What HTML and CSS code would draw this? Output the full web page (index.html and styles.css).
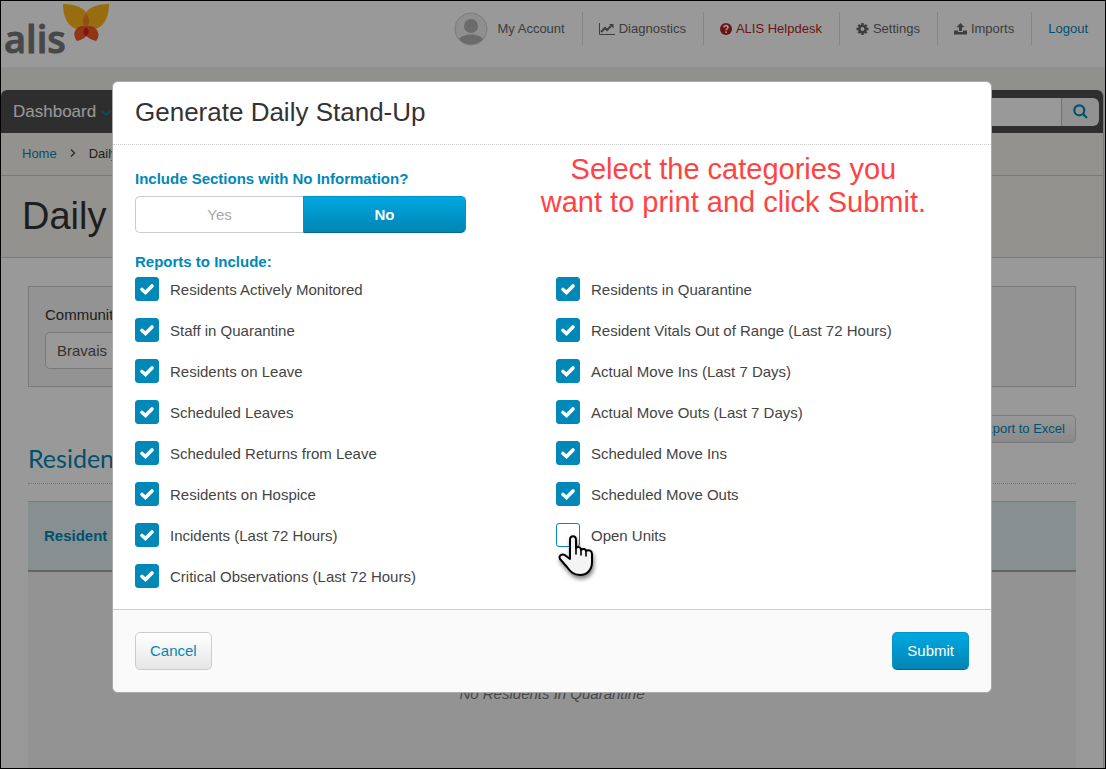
FILE: index.html
```html
<!DOCTYPE html>
<html lang="en">
    <head>
        <meta charset="UTF-8">
        <meta name="viewport" content="width=device-width, initial-scale=1.0">
        <title>Daily Stand-Up</title>
        <link rel="stylesheet" href="styles.css">
    </head>
    <body>
        <div class="screen">
            <header class="header">
                <a href="#" class="logo" aria-label="alis">
                    <span class="logo-text">alis</span>
                    <svg class="logo-mark" width="46" height="38" viewBox="0 0 46 38">
                        <path d="M0 0C14 0 25 5 26 16C26 22 24 25 20 26C8 26 0 17 0 0Z" fill="#fcb61a"/>
                        <path d="M46 0C32 0 21 5 20 16C20 22 22 25 26 26C38 26 46 17 46 0Z" fill="#fcb61a"/>
                        <path d="M23 9C27 14 27 21 23 26C19 21 19 14 23 9Z" fill="#f58220"/>
                        <path d="M14 37C8 30 13 22 20 22C28 23 29 33 14 37Z" fill="#f15a24"/>
                        <path d="M33 37C39 30 33 22 26 22C18 23 18 33 33 37Z" fill="#f15a24"/>
                        <path d="M23 23C27 26 26 30 23 32C20 30 19 26 23 23Z" fill="#d91f26"/>
                    </svg>
                </a>
                <nav class="top-nav">
                    <a href="#" class="account">
                        <svg width="34" height="34" viewBox="0 0 34 34">
                            <circle cx="17" cy="17" r="16" fill="#eee" stroke="#ccc"/>
                            <circle cx="17" cy="14" r="7" fill="#b2b2b2"/>
                            <path d="M5 27C9 21 25 21 29 27C24 34 10 34 5 27Z" fill="#b2b2b2"/>
                        </svg>
                        My Account
                    </a>
                    <a href="#">
                        <svg width="16" height="12" viewBox="0 0 16 12" fill="none" stroke="#666">
                            <path d="M.5 0V11.5H16"/>
                            <path d="M2 9L6 5L8 7L12 3" stroke-width="2"/>
                            <path d="M10 1H14.500V5.500Z" fill="#666" stroke="none"/>
                        </svg>
                        Diagnostics
                    </a>
                    <a href="#" class="helpdesk">
                        <svg width="12" height="12" viewBox="0 0 12 12">
                            <circle cx="6" cy="6" r="6" fill="#b51f1f"/>
                            <path d="M4 4.500C4 2 8 2 8 4.500C8 6 6 5.700 6 7.300" fill="none" stroke="#fff" stroke-width="1.600"/>
                            <path d="M5.200 8.300H6.800V9.900H5.200Z" fill="#fff"/>
                        </svg>
                        ALIS Helpdesk
                    </a>
                    <a href="#">
                        <svg width="13" height="12" viewBox="0 0 12 12">
                            <circle cx="6" cy="6" r="3.200" fill="none" stroke="#666" stroke-width="2.600"/>
                            <path d="M6 0V2M6 10V12M0 6H2M10 6H12M1.800 1.800L3 3M9 9L10.200 10.200M1.800 10.200L3 9M9 3L10.200 1.800" stroke="#666" stroke-width="2.400"/>
                        </svg>
                        Settings
                    </a>
                    <a href="#">
                        <svg width="13" height="12" viewBox="0 0 13 12" fill="#666">
                            <path d="M6.500 0L10.500 4.200H8V8H5V4.200H2.500Z"/>
                            <path d="M0 7.500H4V9H9V7.500H13V11.500H0Z"/>
                        </svg>
                        Imports
                    </a>
                    <a href="#" class="logout">Logout</a>
                </nav>
            </header>

            <div class="page">
                <nav class="main-nav">
                    <a href="#" class="dashboard">
                        Dashboard
                        <svg width="10" height="7" viewBox="0 0 10 7" fill="none" stroke="#0088b8" stroke-width="1.500"><path d="M1 1L5 5L9 1"/></svg>
                    </a>
                    <form class="search">
                        <input type="search" aria-label="Search">
                        <button type="button" aria-label="Search">
                            <svg width="15" height="15" viewBox="0 0 15 15" fill="none" stroke="#0088b8" stroke-width="2.200"><circle cx="6.300" cy="6.300" r="5"/><path d="M10 10L14 14"/></svg>
                        </button>
                    </form>
                </nav>
                <div class="breadcrumb">
                    <a href="#">Home</a>
                    <svg width="6" height="8" viewBox="0 0 6 8" fill="none" stroke="#444" stroke-width="1.300"><path d="M1 .5L4.500 4L1 7.500"/></svg>
                    <span>Daily Stand-Up</span>
                </div>
                <h1>Daily Stand-Up</h1>

                <main class="content">
                    <div class="filters">
                        <label for="community">Community</label>
                        <select id="community">
                            <option>Bravais</option>
                        </select>
                    </div>
                    <button type="button" class="btn export">Export to Excel</button>
                    <h2>Residents in Quarantine</h2>
                    <table>
                        <thead>
                            <tr>
                                <th>Resident</th>
                            </tr>
                        </thead>
                        <tbody>
                            <tr>
                                <td>No Residents In Quarantine</td>
                            </tr>
                        </tbody>
                    </table>
                </main>
            </div>

            <div class="overlay">
                <form class="modal" role="dialog" aria-labelledby="modalTitle">
                    <div class="modal-header">
                        <h3 id="modalTitle">Generate Daily Stand-Up</h3>
                    </div>
                    <div class="modal-body">
                        <p class="note">Select the categories you<br>want to print and click Submit.</p>
                        <h4>Include Sections with No Information?</h4>
                        <div class="toggle">
                            <label><input type="radio" name="empty"><span>Yes</span></label>
                            <label><input type="radio" name="empty" checked><span>No</span></label>
                        </div>
                        <h4>Reports to Include:</h4>
                        <div class="reports">
                            <div class="column">
                                <label><input type="checkbox" checked>Residents Actively Monitored</label>
                                <label><input type="checkbox" checked>Staff in Quarantine</label>
                                <label><input type="checkbox" checked>Residents on Leave</label>
                                <label><input type="checkbox" checked>Scheduled Leaves</label>
                                <label><input type="checkbox" checked>Scheduled Returns from Leave</label>
                                <label><input type="checkbox" checked>Residents on Hospice</label>
                                <label><input type="checkbox" checked>Incidents (Last 72 Hours)</label>
                                <label><input type="checkbox" checked>Critical Observations (Last 72 Hours)</label>
                            </div>
                            <div class="column">
                                <label><input type="checkbox" checked>Residents in Quarantine</label>
                                <label><input type="checkbox" checked>Resident Vitals Out of Range (Last 72 Hours)</label>
                                <label><input type="checkbox" checked>Actual Move Ins (Last 7 Days)</label>
                                <label><input type="checkbox" checked>Actual Move Outs (Last 7 Days)</label>
                                <label><input type="checkbox" checked>Scheduled Move Ins</label>
                                <label><input type="checkbox" checked>Scheduled Move Outs</label>
                                <label class="hovered">
                                    <input type="checkbox">Open Units
                                    <svg class="cursor" width="36" height="44" viewBox="0 0 36 44">
                                        <path d="M12 21V6C12 1 18 1 18 6V14C20 12 23 13 23 16C25 14 28 15 28 17C31 15 34 17 34 20V28C34 36 29 41 22 41C15 41 12 37 9 33L2 25C0 21 5 19 8 22L12 25Z" fill="#f4f4f4" stroke="#000" stroke-width="2" stroke-linejoin="round"/>
                                        <path d="M18 13V20M23 15V21M28 17V22" stroke="#000" stroke-width="1.600" stroke-linecap="round"/>
                                    </svg>
                                </label>
                            </div>
                        </div>
                    </div>
                    <div class="modal-footer">
                        <button type="button" class="btn">Cancel</button>
                        <button type="button" class="btn primary">Submit</button>
                    </div>
                </form>
            </div>
        </div>
    </body>
</html>
```
FILE: styles.css
```css
* {
    box-sizing: border-box;
}
body {
    margin: 0;
    font-family: "Liberation Sans", Arial, sans-serif;
    font-size: 15px;
    color: #333;
}
a {
    color: #0088b8;
    text-decoration: none;
}
h1, h2, h3, h4, p {
    margin: 0;
    font-weight: normal;
}
button, input, select {
    font-family: inherit;
}
.screen {
    position: relative;
    height: 100vh;
    overflow: hidden;
    border: 1px solid #000;
    background-color: #f1f1ec;
}

/* header */
.header {
    display: flex;
    justify-content: space-between;
    height: 66px;
    background-color: #fff;
}
.logo {
    display: flex;
    padding: 3px 0 0 3px;
    color: #77787b;
}
.logo-text {
    font-family: "Open Sans", sans-serif;
    font-size: 38px;
    font-weight: 600;
    line-height: 68px;
    margin-right: -3px;
    -webkit-text-stroke: 1px #77787b;
}
.top-nav {
    display: flex;
    padding-top: 11px;
}
.top-nav a {
    display: flex;
    align-items: center;
    gap: 4px;
    height: 33px;
    padding: 0 17px 0 16px;
    border-left: 1px solid #e0e0e0;
    font-size: 13px;
    color: #666;
}
.top-nav .account {
    gap: 10px;
    border-left: none;
}
.top-nav .helpdesk {
    color: #b51f1f;
}
.top-nav .logout {
    color: #0088b8;
}

/* page */
.page {
    margin: 23px 1px 0 0;
    border-right: 1px solid #ccc;
    background-color: #fff;
    border-radius: 6px 6px 0 0;
}
.main-nav {
    display: flex;
    justify-content: space-between;
    align-items: center;
    height: 43px;
    padding: 0 4px 0 12px;
    background-color: #4d4d4d;
    border-radius: 6px 6px 0 0;
}
.dashboard {
    font-size: 17px;
    color: #fff;
}
.search {
    display: flex;
    width: 260px;
    height: 28px;
}
.search input {
    flex: 1;
    min-width: 0;
    border: none;
    border-radius: 6px 0 0 6px;
    background-color: #fff;
}
.search button {
    width: 38px;
    padding: 2px 0 0;
    border: none;
    border-left: 1px solid #bbb;
    border-radius: 0 6px 6px 0;
    background-color: #f4f4f4;
}
.breadcrumb {
    display: flex;
    align-items: center;
    gap: 13px;
    height: 43px;
    padding: 0 21px 2px;
    border-bottom: 1px solid #ccc;
    background-color: #f7f4ee;
    font-size: 13px;
}
.page h1 {
    padding-left: 21px;
    border-bottom: 1px solid #ccc;
    background-color: #f7f4ee;
    font-size: 38px;
    line-height: 81px;
}
.content {
    display: flex;
    flex-direction: column;
    padding: 28px 27px 0;
}
.filters {
    display: flex;
    flex-direction: column;
    align-items: flex-start;
    gap: 9px;
    padding: 19px 16px 17px;
    border: 1px solid #ccc;
    background-color: #f5f5f5;
}
.filters select {
    appearance: none;
    width: 240px;
    height: 37px;
    padding: 0 11px;
    border: 1px solid #ccc;
    border-radius: 5px;
    background-color: #fff;
    font-size: 15px;
    color: #555;
}
.btn {
    height: 38px;
    padding: 0 14px 2px;
    border: 1px solid #ccc;
    border-radius: 5px;
    background: linear-gradient(#fff, #e6e6e6);
    font-size: 15px;
    color: #0088b8;
}
.btn.export {
    align-self: flex-end;
    height: 28px;
    margin-top: 28px;
    padding: 0 10px 2px;
    font-size: 13px;
}
.content h2 {
    margin-bottom: 17px;
    padding-bottom: 10px;
    border-bottom: 1px dotted #bbb;
    font-family: Lato, sans-serif;
    font-size: 25px;
    line-height: 30px;
    color: #0088b8;
}
table {
    width: 100%;
    border-collapse: collapse;
}
th {
    height: 69px;
    padding: 0 16px;
    border-top: 1px solid #ccc;
    border-bottom: 2px solid #a5a5a5;
    background-color: #e3eff2;
    text-align: left;
    color: #0088b8;
}
td {
    height: 244px;
    background-color: #f5f5f5;
    text-align: center;
    font-style: italic;
    color: #777;
}

/* modal */
.overlay {
    position: absolute;
    inset: 0;
    display: flex;
    justify-content: center;
    align-items: flex-start;
    padding: 80px 22px 80px 20px;
    background-color: rgba(0, 0, 0, 0.4);
}
.modal {
    width: 100%;
    max-width: 880px;
    border: 1px solid #aaa;
    border-radius: 6px;
    background-color: #fff;
}
.modal-header {
    padding: 0 22px 2px;
    border-bottom: 1px dotted #ccc;
}
.modal-header h3 {
    font-size: 26px;
    line-height: 60px;
}
.modal-body {
    position: relative;
    padding: 24px 22px 21px;
    color: #444;
}
.modal-body h4 {
    font-size: 15px;
    font-weight: bold;
    line-height: 20px;
    color: #0088b8;
}
.note {
    position: absolute;
    top: 8px;
    right: 65px;
    font-size: 29px;
    line-height: 33px;
    text-align: center;
    color: #ff4343;
}
.toggle {
    display: grid;
    grid-template-columns: 168px 163px;
    margin: 7px 0 19px;
}
.toggle label {
    position: relative;
}
.toggle input {
    position: absolute;
    opacity: 0;
}
.toggle span {
    display: block;
    border: 1px solid #ccc;
    border-right: none;
    border-radius: 5px 0 0 5px;
    line-height: 35px;
    text-align: center;
    color: #aaa;
}
.toggle label:last-child span {
    border-radius: 0 5px 5px 0;
}
.toggle input:checked + span, .primary {
    border: 1px solid #0094c8;
    border-bottom-color: #006a90;
    background: linear-gradient(#00a8e1, #0085b3);
    color: #fff;
}
.toggle input:checked + span {
    font-weight: bold;
}
.reports {
    display: grid;
    grid-template-columns: 421px 1fr;
    margin-top: 5px;
}
.column {
    display: flex;
    flex-direction: column;
    align-items: flex-start;
    gap: 17px;
}
.column label {
    display: flex;
    align-items: center;
    gap: 11px;
    height: 24px;
}
.column input {
    appearance: none;
    width: 24px;
    height: 24px;
    margin: 0;
    border: 1px solid #0088b8;
    border-radius: 3px;
}
.column input:checked {
    background: #0088b8 url("data:image/svg+xml,%3Csvg xmlns='http://www.w3.org/2000/svg' viewBox='0 0 22 22'%3E%3Cpath d='M6 11.500L9.500 14.500L16 8' fill='none' stroke='white' stroke-width='3.600' stroke-linecap='round'/%3E%3C/svg%3E");
}
.hovered {
    position: relative;
}
.cursor {
    position: absolute;
    left: 2px;
    top: 11px;
    filter: drop-shadow(1px 3px 2px rgba(0, 0, 0, 0.5));
}
.modal-footer {
    display: flex;
    justify-content: space-between;
    padding: 22px;
    border-top: 1px solid #ccc;
    border-radius: 0 0 6px 6px;
    background-color: #fafafa;
}
```
